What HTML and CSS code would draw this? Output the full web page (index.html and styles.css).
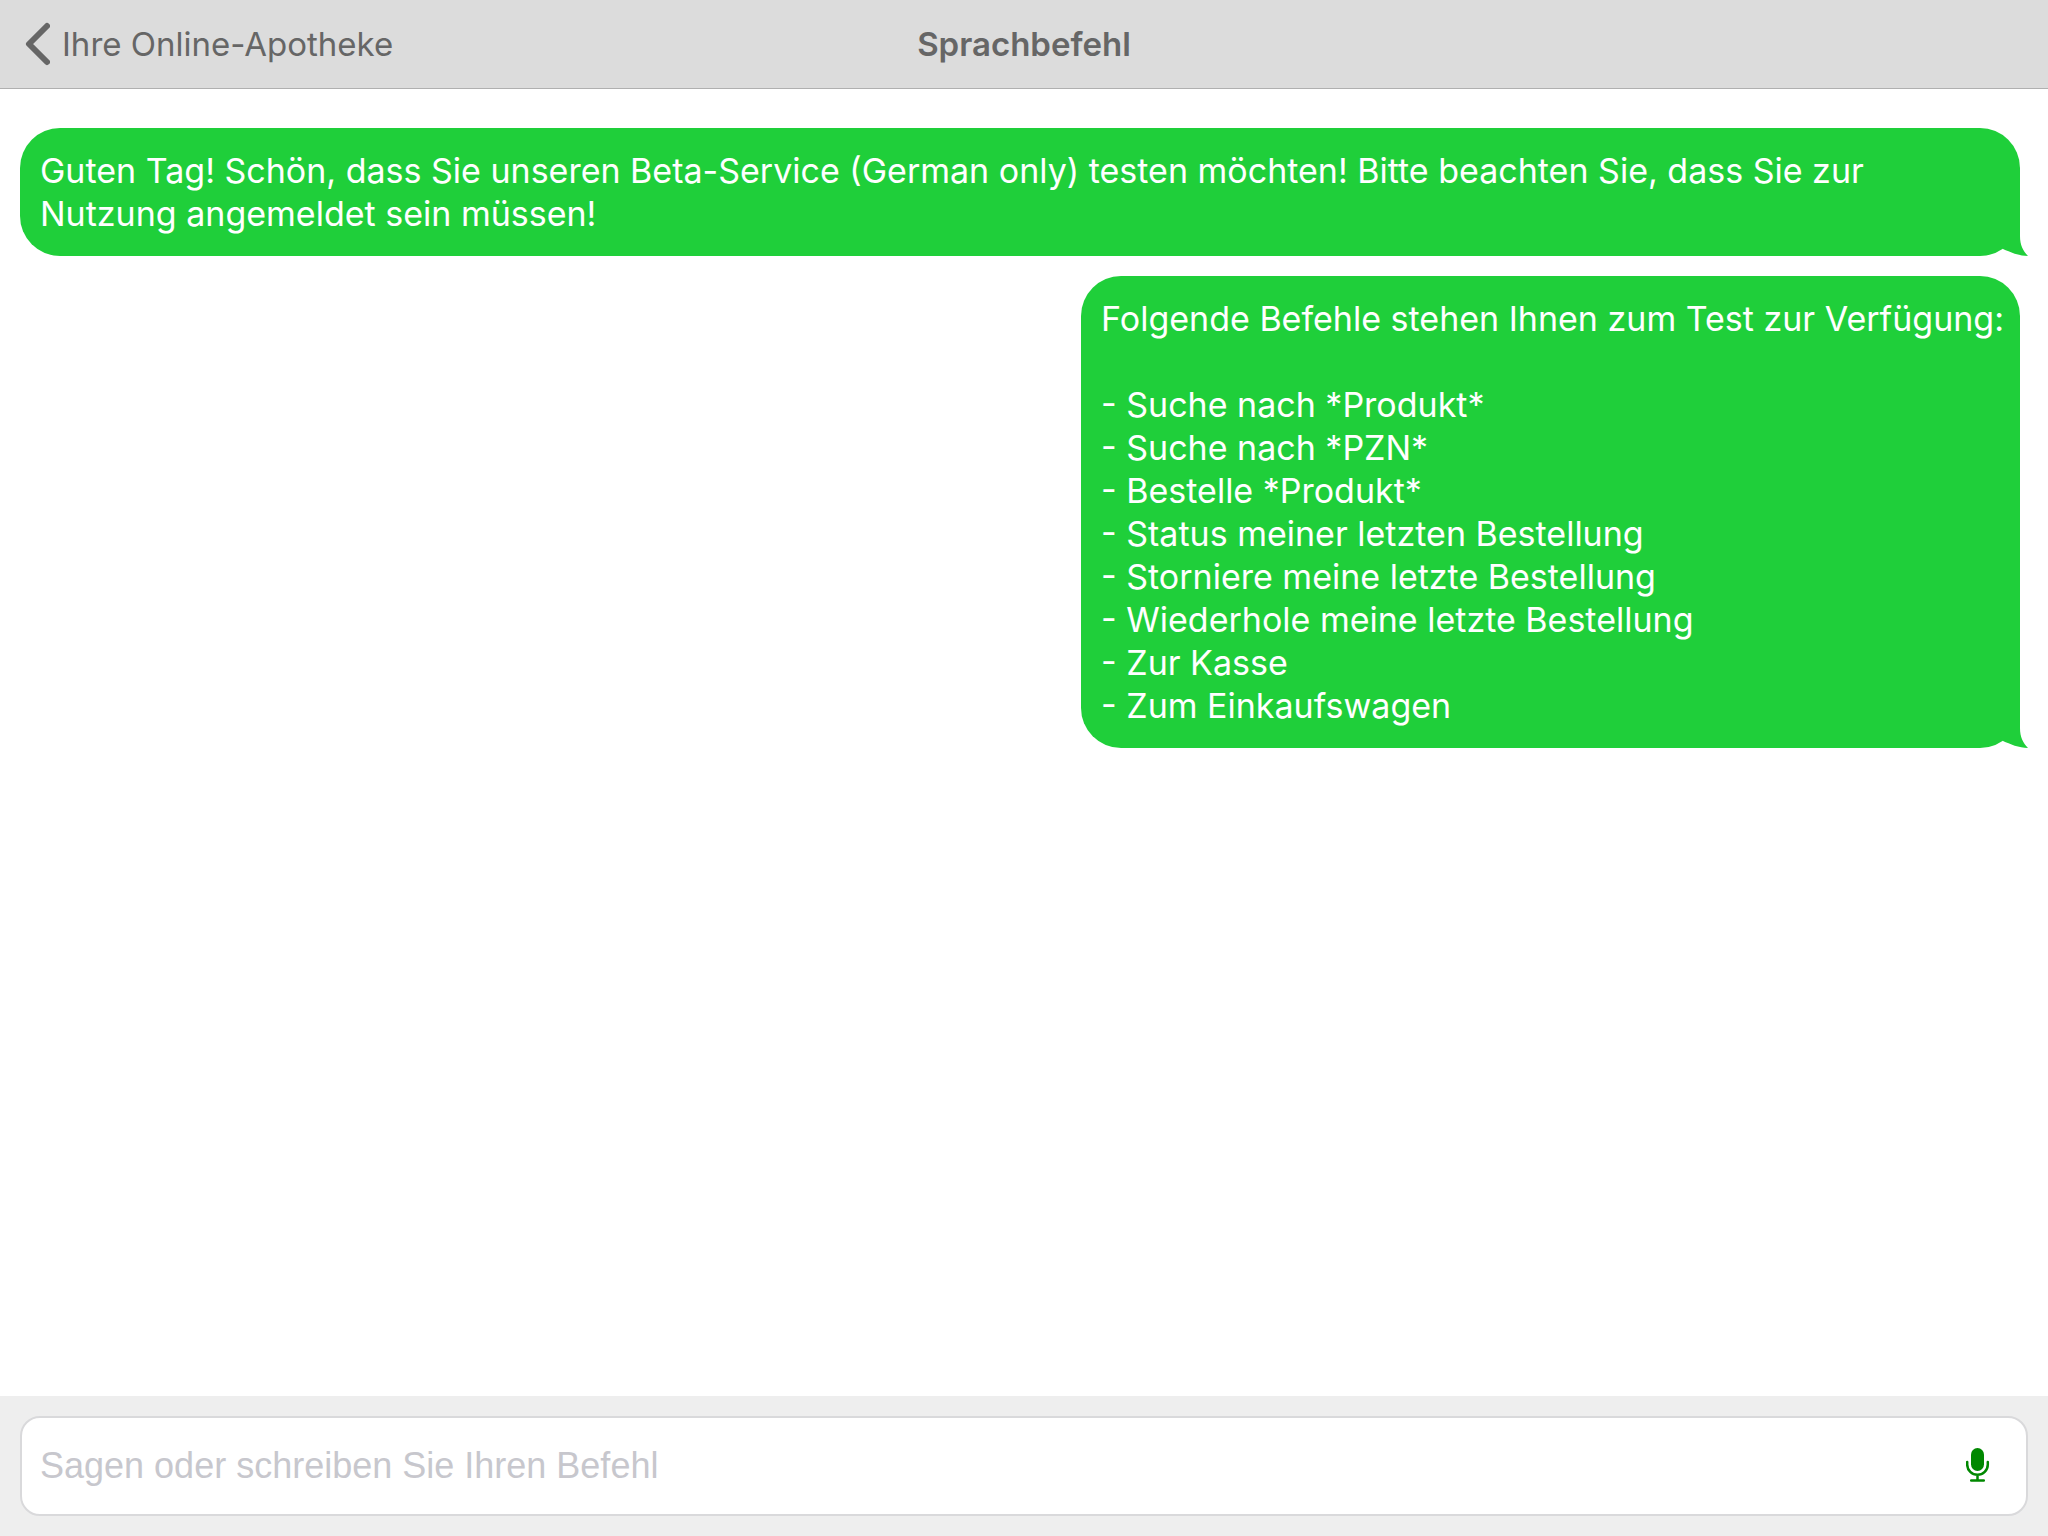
FILE: index.html
```html
<!DOCTYPE html>
<html lang="de">
<head>
<meta charset="utf-8">
<meta name="viewport" content="width=device-width, initial-scale=1">
<title>Sprachbefehl</title>
<link rel="stylesheet" href="styles.css">
</head>
<body>
<header class="navbar">
  <a class="back" href="#">
    <svg class="back-icon" viewBox="0 0 26 44" aria-hidden="true"><path d="M23 4 5 22 23 40"/></svg>
    <span>Ihre Online-Apotheke</span>
  </a>
  <h1 class="title">Sprachbefehl</h1>
</header>
<main class="chat">
  <div class="bubble">
    <p class="text">Guten Tag! Schön, dass Sie unseren Beta-Service (German only) testen möchten! Bitte beachten Sie, dass Sie zur Nutzung angemeldet sein müssen!</p>
    <svg class="tail" viewBox="0 0 28 40" aria-hidden="true"><path d="M0 0H20V20C20 29 23 35 28 40C19 40 10 36 3 33L0 28Z"/></svg>
  </div>
  <div class="bubble">
    <p class="text">Folgende Befehle stehen Ihnen zum Test zur Verfügung:

- Suche nach *Produkt*
- Suche nach *PZN*
- Bestelle *Produkt*
- Status meiner letzten Bestellung
- Storniere meine letzte Bestellung
- Wiederhole meine letzte Bestellung
- Zur Kasse
- Zum Einkaufswagen</p>
    <svg class="tail" viewBox="0 0 28 40" aria-hidden="true"><path d="M0 0H20V20C20 29 23 35 28 40C19 40 10 36 3 33L0 28Z"/></svg>
  </div>
</main>
<form class="composer">
  <div class="field">
    <input class="input" type="text" aria-label="Befehl" placeholder="Sagen oder schreiben Sie Ihren Befehl">
    <button class="mic" type="button" aria-label="Spracheingabe">
      <svg class="mic-icon" viewBox="0 0 24 36" aria-hidden="true">
        <rect x="5" y="0" width="13" height="23" rx="6.500"/>
        <path d="M1.200 14V16.500C1.200 22.500 6 26.800 11.500 26.800S21.800 22.500 21.800 16.500V14M11.500 27V32M5.200 32.500H17.800"/>
      </svg>
    </button>
  </div>
</form>
</body>
</html>
```
FILE: styles.css
```css
* {
  box-sizing: border-box;
}

body {
  margin: 0;
  min-height: 100vh;
  display: flex;
  flex-direction: column;
  background: #fff;
  font-family: Inter, "Liberation Sans", sans-serif;
}

.navbar {
  display: grid;
  grid-template-columns: 1fr auto 1fr;
  align-items: center;
  height: 89px;
  padding: 0 24px;
  background: #dcdcdc;
  border-bottom: 1px solid #b0b0b0;
  color: #666;
}

.back {
  display: flex;
  align-items: center;
  gap: 12px;
  color: inherit;
  font-size: 33px;
  line-height: 44px;
  text-decoration: none;
  white-space: nowrap;
}

.back-icon {
  width: 26px;
  height: 44px;
  fill: none;
  stroke: currentColor;
  stroke-width: 6;
  stroke-linecap: round;
  stroke-linejoin: round;
}

.title {
  margin: 0;
  font-size: 33px;
  line-height: 44px;
  font-weight: 600;
}

.chat {
  flex: 1;
  display: flex;
  flex-direction: column;
  align-items: flex-end;
  gap: 20px;
  padding: 39px 28px 20px 20px;
}

.bubble {
  position: relative;
  padding: 21px 16px 21px 20px;
  border-radius: 40px;
  background: #1fcf3a;
  color: #fff;
}

.text {
  margin: 0;
  font-size: 34px;
  line-height: 43px;
  white-space: pre-wrap;
}

.tail {
  position: absolute;
  right: -8px;
  bottom: 0;
  width: 28px;
  height: 40px;
  fill: #1fcf3a;
}

.composer {
  padding: 20px;
  background: #eee;
}

.field {
  display: flex;
  align-items: center;
  height: 100px;
  padding: 0 36px 0 18px;
  border: 2px solid #d9d9db;
  border-radius: 20px;
  background: #fff;
}

.input {
  flex: 1;
  min-width: 0;
  padding: 0;
  border: 0;
  outline: 0;
  background: transparent;
  color: #333;
  font-family: "Liberation Sans", Arial, sans-serif;
  font-size: 36px;
  line-height: 44px;
}

.input::placeholder {
  color: #c7c7cd;
  opacity: 1;
}

.mic {
  display: flex;
  padding: 0;
  border: 0;
  background: none;
}

.mic-icon {
  width: 24px;
  height: 36px;
  fill: #080;
}

.mic-icon path {
  fill: none;
  stroke: #080;
  stroke-width: 2.500;
  stroke-linecap: round;
}
```
